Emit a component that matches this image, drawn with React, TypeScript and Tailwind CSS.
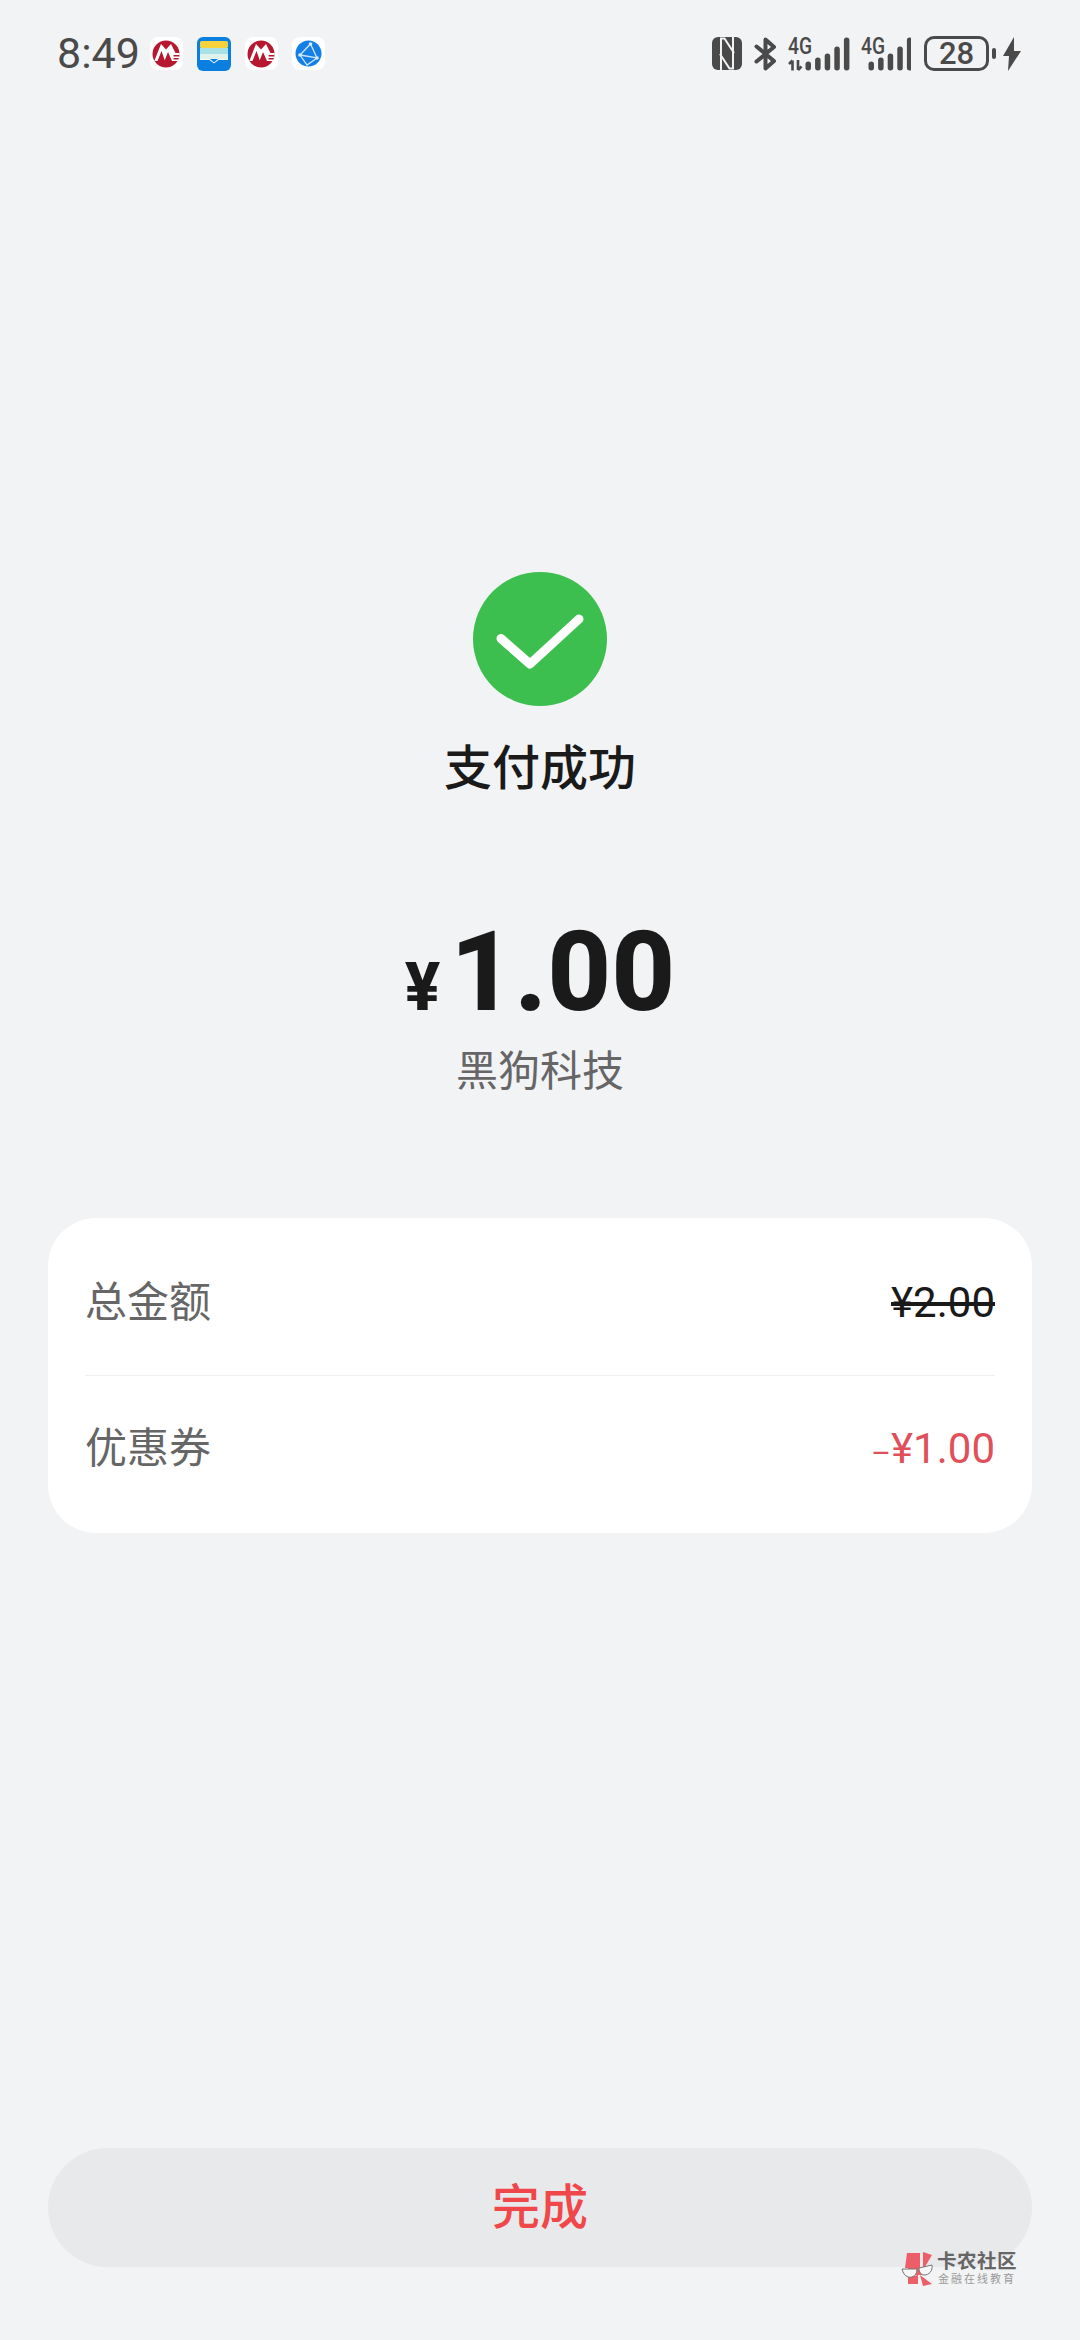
import React from "react";

const Cmb = () => (
  <div className="w-[33px] h-[33px] rounded-[8px] bg-white flex items-center justify-center">
    <svg width="28" height="28" viewBox="0 0 28 28">
      <circle cx="14" cy="14" r="13.5" fill="#b5182f" />
      <path d="M2.5 20.5 L9 4 L14 9.5 L19 4 L23.5 13 H27.5 V15 H21.5 V21 H2.5 Z" fill="#fff" />
      <path d="M5.5 21 L9.5 11 L13 21 Z M12.5 21 L16 12 L20 21 Z" fill="#b5182f" />
      <path d="M21 16.5 H27.2 V18 H21 Z M21 19.5 H26 V21 H21 Z" fill="#fff" />
    </svg>
  </div>
);

const Wallet = () => (
  <svg width="34" height="34" viewBox="0 0 34 34">
    <rect width="34" height="34" rx="6" fill="#0b7fe0" />
    <rect x="3" y="4" width="28" height="7" rx="1.5" fill="#f6d23c" />
    <rect x="3" y="11" width="28" height="6" fill="#a8e2e6" />
    <rect x="3" y="17" width="28" height="5" fill="#dff3ec" />
    <path d="M3 22 H13 L17 25.5 L21 22 H31 V23 H21.5 L17 26.5 L12.5 23 H3 Z" fill="#ffffff" />
  </svg>
);

const Net = () => (
  <div className="w-[33px] h-[33px] rounded-[8px] bg-white flex items-center justify-center">
    <svg width="27" height="27" viewBox="0 0 27 27">
      <circle cx="13.5" cy="13.5" r="13" fill="#1480e6" />
      <path d="M15.5 4 L22 18 L5 15 Z M22 18 L12 25 L5 15" fill="none" stroke="#cfe7ff" strokeWidth="1.3" />
      <circle cx="15.5" cy="4" r="1.8" fill="#d5ebff" />
      <circle cx="5" cy="15" r="1.8" fill="#d5ebff" />
      <circle cx="22" cy="18" r="1.8" fill="#d5ebff" />
    </svg>
  </div>
);

const Nfc = () => (
  <svg width="30" height="33" viewBox="0 0 30 33">
    <rect width="30" height="33" rx="6" fill="#4a4a4a" />
    <path d="M9 33 V1.5 H12.5 L22 16" fill="none" stroke="#f2f3f5" strokeWidth="2" />
    <path d="M21 0 V31.5 H17.5 L8 17" fill="none" stroke="#f2f3f5" strokeWidth="2" />
  </svg>
);

const Bt = () => (
  <svg width="23" height="34" viewBox="0 0 23 34">
    <path d="M2.5 9.5 L20 24 L11.5 31.5 V2.5 L20 10 L2.5 24.5" fill="none" stroke="#4a4a4a" strokeWidth="4" strokeLinejoin="round" strokeLinecap="round" />
  </svg>
);

const Sig = ({ arrows, w, x0 }: { arrows: boolean; w: number; x0: number }) => (
  <svg width={w} height="42" viewBox={`0 -8 ${w} 42`} className="-mt-[8px]">
    <text x="0" y="17" fontSize="23" fontWeight="500" textLength="24" lengthAdjust="spacingAndGlyphs" fill="#4a4a4a" fontFamily="Roboto, sans-serif">4G</text>
    {arrows && (
      <path d="M4.5 33.5 V23.5 M1 27 L4.5 23.5 M10 23 V33 M10 33 L13.5 29.5" stroke="#4a4a4a" strokeWidth="2.6" fill="none" />
    )}
    {[9, 13, 17, 24, 33].map((h, i) => (
      <rect key={i} x={x0 + i * 9.6} y={33.5 - h} width="5.5" height={h} rx="2.7" fill="#4a4a4a" />
    ))}
  </svg>
);

const Row = ({ label, children, cls }: { label: string; children: React.ReactNode; cls: string }) => (
  <div className={`h-[157px] flex items-center justify-between ${cls}`}>
    <span className="text-[42px] text-[#666666]">{label}</span>
    {children}
  </div>
);

export default function App() {
  return (
    <div
      className="relative w-[1080px] h-[2340px] bg-[#f2f3f5] flex flex-col overflow-hidden"
      style={{ fontFamily: 'Roboto, "Noto Sans CJK SC", sans-serif' }}
    >
      <div className="h-[106px] pt-[36px] pl-[57px] pr-[59px] flex items-start justify-between">
        <div className="flex items-center h-[35px]">
          <span className="text-[43px] leading-[35px] font-[450] text-[#4a4a4a] mr-[10px]">8:49</span>
          <div className="flex items-center gap-[14px]">
            <Cmb />
            <Wallet />
            <Cmb />
            <Net />
          </div>
        </div>
        <div className="flex items-center h-[35px]">
          <Nfc />
          <div className="ml-[12px]"><Bt /></div>
          <div className="ml-[11px]"><Sig arrows w={62} x0={17.5} /></div>
          <div className="ml-[11px]"><Sig arrows={false} w={50} x0={7.5} /></div>
          <div className="ml-[13px] w-[65px] h-[35px] rounded-[10px] border-[3px] border-[#4a4a4a] flex items-center justify-center text-[31px] font-medium leading-none text-[#4a4a4a]">28</div>
          <div className="ml-[3px] w-[4px] h-[11px] rounded-[2px] bg-[#4a4a4a]" />
          <svg width="18" height="34" viewBox="0 0 18 34" className="ml-[7px]">
            <path d="M11 0 L0 19 H6 L5 34 L18 14 H11 Z" fill="#4a4a4a" />
          </svg>
        </div>
      </div>

      <div className="flex flex-col items-center">
        <div className="mt-[466px] w-[134px] h-[134px] rounded-full bg-[#3dbf50] flex items-center justify-center">
          <svg width="134" height="134" viewBox="0 0 134 134">
            <path d="M28 66.5 L57 92 L106 47" fill="none" stroke="#fff" strokeWidth="9" strokeLinecap="round" strokeLinejoin="round" />
          </svg>
        </div>
        <div className="mt-[31px] text-[48px] leading-[64px] font-medium text-[#1a1a1a]">支付成功</div>
        <div className="mt-[105px] flex items-baseline h-[132px] text-[#1a1a1a] font-extrabold">
          <span className="text-[66px] leading-[132px] mr-[10px]">¥</span>
          <span className="text-[111px] leading-[132px]">1.00</span>
        </div>
        <div className="mt-[6px] text-[42px] leading-[56px] text-[#666666]">黑狗科技</div>
      </div>

      <div className="mx-[48px] mt-[118px] rounded-[48px] bg-white px-[37px]">
        <Row label="总金额" cls="pt-[12px]">
          <span className="text-[42px] text-[#1a1a1a] line-through">¥2.00</span>
        </Row>
        <div className="h-[1px] bg-[#f0f0f0]" />
        <Row label="优惠券" cls="pb-[12px]">
          <span className="text-[42px] text-[#e0505a]"><span className="text-[30px]">–</span>¥1.00</span>
        </Row>
      </div>

      <div className="mt-auto mb-[73px] mx-[48px] h-[119px] rounded-full bg-[#e8e9eb] flex items-center justify-center">
        <span className="text-[48px] font-medium text-[#f0484a]">完成</span>
      </div>

      <div className="absolute left-[895px] top-[2245px] flex items-center">
        <svg width="42" height="46" viewBox="0 0 42 46">
          <path d="M12 8 H25 V23 H10 Z M28 7 L37 10 L28 25 Z M13 32 L23 30 V39 H13 Z M25 30 L37 39 L28 41 Z" fill="#ec5f68" />
          <path d="M13 23 H28 V30 H13 Z" fill="#ec5f68" />
          <path d="M7 24 H22 C22 30 18 33 13 32 C10 31 8 28 7 24 Z M24 23 L37 20 C38 26 34 30 29 30 C26 30 24 27 24 23 Z" fill="#f7f7f7" stroke="#777" strokeWidth="1" />
        </svg>
        <div className="flex flex-col">
          <span className="text-[19.5px] leading-[22px] font-bold text-[#666666] tracking-[0.5px]">卡农社区</span>
          <span className="text-[11px] leading-[13px] ml-[1px] text-[#9a9a9a] tracking-[2px]">金融在线教育</span>
        </div>
      </div>
    </div>
  );
}
